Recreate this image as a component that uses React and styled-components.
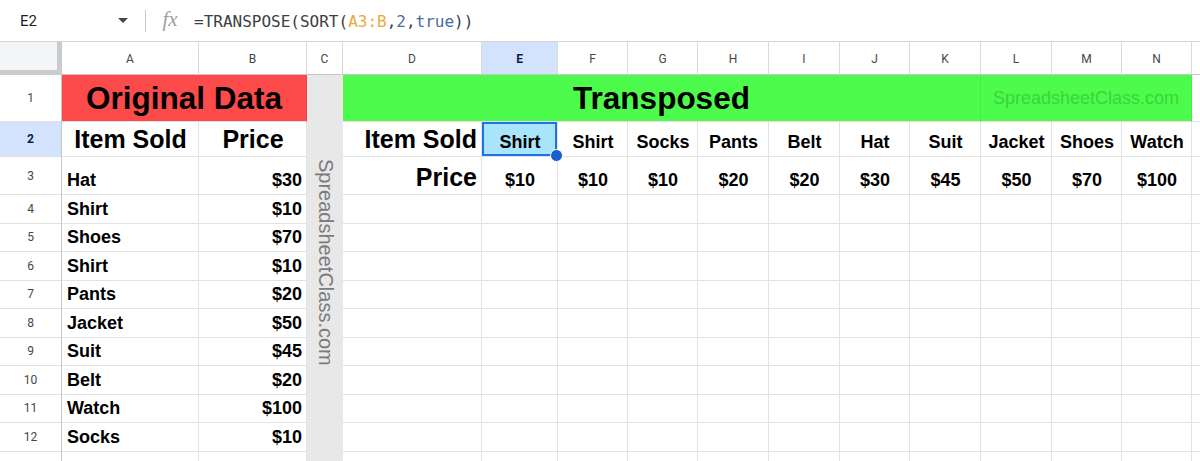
import styled, { createGlobalStyle } from "styled-components";

const GlobalStyle = createGlobalStyle`
  html, body {
    margin: 0;
    padding: 0;
    background: #fff;
    overflow: hidden;
  }
  * {
    box-sizing: border-box;
  }
`;

const COLS = ["A", "B", "C", "D", "E", "F", "G", "H", "I", "J", "K", "L", "M", "N", ""];

const original = [
  ["Hat", "$30"],
  ["Shirt", "$10"],
  ["Shoes", "$70"],
  ["Shirt", "$10"],
  ["Pants", "$20"],
  ["Jacket", "$50"],
  ["Suit", "$45"],
  ["Belt", "$20"],
  ["Watch", "$100"],
  ["Socks", "$10"],
];

const sorted = [
  ["Shirt", "$10"],
  ["Shirt", "$10"],
  ["Socks", "$10"],
  ["Pants", "$20"],
  ["Belt", "$20"],
  ["Hat", "$30"],
  ["Suit", "$45"],
  ["Jacket", "$50"],
  ["Shoes", "$70"],
  ["Watch", "$100"],
];

const App = () => {
  return (
    <Page>
      <GlobalStyle />
      <FormulaBar>
        <NameBox>
          <span>E2</span>
          <Caret />
        </NameBox>
        <Divider />
        <Fx>fx</Fx>
        <Formula>
          =TRANSPOSE(SORT(<Ref>A3:B</Ref>,<Arg>2</Arg>,<Arg>true</Arg>))
        </Formula>
      </FormulaBar>

      <Sheet>
        <Corner />
        {COLS.map((c, i) => (
          <ColHead key={i} $active={c === "E"}>
            {c}
          </ColHead>
        ))}

        <Gutter>
          <Watermark>SpreadsheetClass.com</Watermark>
        </Gutter>

        {/* row 1 */}
        <RowHead>1</RowHead>
        <Title $span={2} $bg="#fd4a4a">
          Original Data
        </Title>
        <Title $span={8} $bg="#4cfb4c">
          Transposed
        </Title>
        <Title $span={3} $bg="#4cfb4c" $small>
          SpreadsheetClass.com
        </Title>
        <Cell />

        {/* row 2 */}
        <RowHead $active>2</RowHead>
        <Cell $align="center" $size={25}>
          Item Sold
        </Cell>
        <Cell $align="center" $size={25}>
          Price
        </Cell>
        <Cell $align="right" $size={25}>
          Item Sold
        </Cell>
        {sorted.map(([item], i) => (
          <Cell key={i} $align="center" $selected={i === 0}>
            {item}
          </Cell>
        ))}
        <Cell />

        {/* row 3 */}
        <RowHead>3</RowHead>
        <Cell>{original[0][0]}</Cell>
        <Cell $align="right">{original[0][1]}</Cell>
        <Cell $align="right" $size={25}>
          Price
        </Cell>
        {sorted.map(([, price], i) => (
          <Cell key={i} $align="center">
            {price}
          </Cell>
        ))}
        <Cell />

        {/* rows 4 - 12 */}
        {original.slice(1).map(([item, price], r) => (
          <Row key={r} num={r + 4} a={item} b={price} />
        ))}
        <Row num={13} />
      </Sheet>
    </Page>
  );
};

const Row = ({ num, a = "", b = "" }) => (
  <>
    <RowHead>{num}</RowHead>
    <Cell>{a}</Cell>
    <Cell $align="right">{b}</Cell>
    {Array.from({ length: 12 }).map((_, i) => (
      <Cell key={i} />
    ))}
  </>
);

const Page = styled.div`
  width: 1200px;
  height: 461px;
  overflow: hidden;
  background: #fff;
`;

const FormulaBar = styled.div`
  height: 42px;
  display: flex;
  align-items: center;
  border-bottom: 1px solid #d4d4d4;
`;

const NameBox = styled.div`
  width: 145px;
  display: flex;
  align-items: center;
  justify-content: space-between;
  padding: 0 17px 0 20px;
  font-family: Roboto, "Liberation Sans", sans-serif;
  font-size: 15px;
  color: #1f1f1f;
`;

const Caret = styled.span`
  width: 0;
  height: 0;
  border-left: 5px solid transparent;
  border-right: 5px solid transparent;
  border-top: 5px solid #444746;
`;

const Divider = styled.div`
  width: 1px;
  height: 22px;
  background: #c7c7c7;
`;

const Fx = styled.span`
  width: 48px;
  text-align: center;
  font-family: "Liberation Serif", serif;
  font-style: italic;
  font-size: 21px;
  color: #a0a0a0;
  padding-bottom: 2px;
`;

const Formula = styled.div`
  font-family: "DejaVu Sans Mono", "Liberation Mono", monospace;
  font-size: 16px;
  color: #3c4043;
  padding-top: 2px;
`;

const Ref = styled.span`
  color: #eaa93d;
`;

const Arg = styled.span`
  color: #4a6d9e;
`;

const Sheet = styled.div`
  display: grid;
  grid-template-columns: 62px 137px 108px 36px 139px 76px 70px 70px 71px 71px 70px 71px 71px 70px 70px 1fr;
  grid-template-rows: 33px 47px 35px 38px repeat(9, 28.5px) 30px;
  height: 419px;
  overflow: hidden;
`;

const Corner = styled.div`
  background: #f4f5f6;
  border-right: 5px solid #c9cbcc;
  border-bottom: 5px solid #c9cbcc;
`;

const ColHead = styled.div`
  display: flex;
  align-items: center;
  justify-content: center;
  padding-top: 1px;
  border-right: 1px solid #d9d9d9;
  border-bottom: 1px solid #c4c7c5;
  background: ${(p) => (p.$active ? "#d3e3fd" : "#fff")};
  font-family: Roboto, "Liberation Sans", sans-serif;
  font-size: 12px;
  font-weight: ${(p) => (p.$active ? 700 : 400)};
  color: ${(p) => (p.$active ? "#041e49" : "#444746")};
`;

const RowHead = styled.div`
  display: flex;
  align-items: center;
  justify-content: center;
  border-right: 1px solid #c4c7c5;
  border-bottom: 1px solid #e0e0e0;
  background: ${(p) => (p.$active ? "#d3e3fd" : "#fff")};
  font-family: Roboto, "Liberation Sans", sans-serif;
  font-size: 12px;
  font-weight: ${(p) => (p.$active ? 700 : 400)};
  color: ${(p) => (p.$active ? "#041e49" : "#444746")};
`;

const Gutter = styled.div`
  grid-column: 4;
  grid-row: 2 / 16;
  background: #e8e8e8;
  display: flex;
  justify-content: center;
  padding-top: 84px;
`;

const Watermark = styled.div`
  writing-mode: vertical-rl;
  font-family: "Liberation Sans", Arial, sans-serif;
  font-size: 20px;
  color: #7b7b7b;
  white-space: nowrap;
`;

const Title = styled.div`
  grid-column: span ${(p) => p.$span};
  display: flex;
  align-items: center;
  justify-content: center;
  background: ${(p) => p.$bg};
  border-right: 1px solid rgba(0, 0, 0, 0.05);
  border-bottom: 1px solid #e2e2e2;
  font-family: "Liberation Sans", Arial, sans-serif;
  font-weight: ${(p) => (p.$small ? 400 : 700)};
  font-size: ${(p) => (p.$small ? "18px" : "31.5px")};
  color: ${(p) => (p.$small ? "#3bd43b" : "#000")};
  padding-top: 1px;
  white-space: nowrap;
`;

const Cell = styled.div`
  position: relative;
  display: flex;
  align-items: flex-end;
  justify-content: ${(p) =>
    p.$align === "right" ? "flex-end" : p.$align === "center" ? "center" : "flex-start"};
  padding: 0 4px ${(p) => (p.$size ? "2px" : "3px")} 5px;
  border-right: 1px solid #e2e2e2;
  border-bottom: 1px solid #e2e2e2;
  background: ${(p) => (p.$selected ? "#a8e5fb" : "#fff")};
  box-shadow: ${(p) => (p.$selected ? "inset 0 0 0 2px #1a73e8" : "none")};
  font-family: "Liberation Sans", Arial, sans-serif;
  font-weight: 700;
  font-size: ${(p) => p.$size || 18}px;
  line-height: 1.15;
  color: #000;
  white-space: nowrap;

  &::after {
    content: "";
    display: ${(p) => (p.$selected ? "block" : "none")};
    position: absolute;
    right: -6px;
    bottom: -6px;
    width: 11px;
    height: 11px;
    border-radius: 50%;
    background: #1a5fd0;
    border: 1px solid #fff;
    z-index: 2;
  }
`;

export default App;
